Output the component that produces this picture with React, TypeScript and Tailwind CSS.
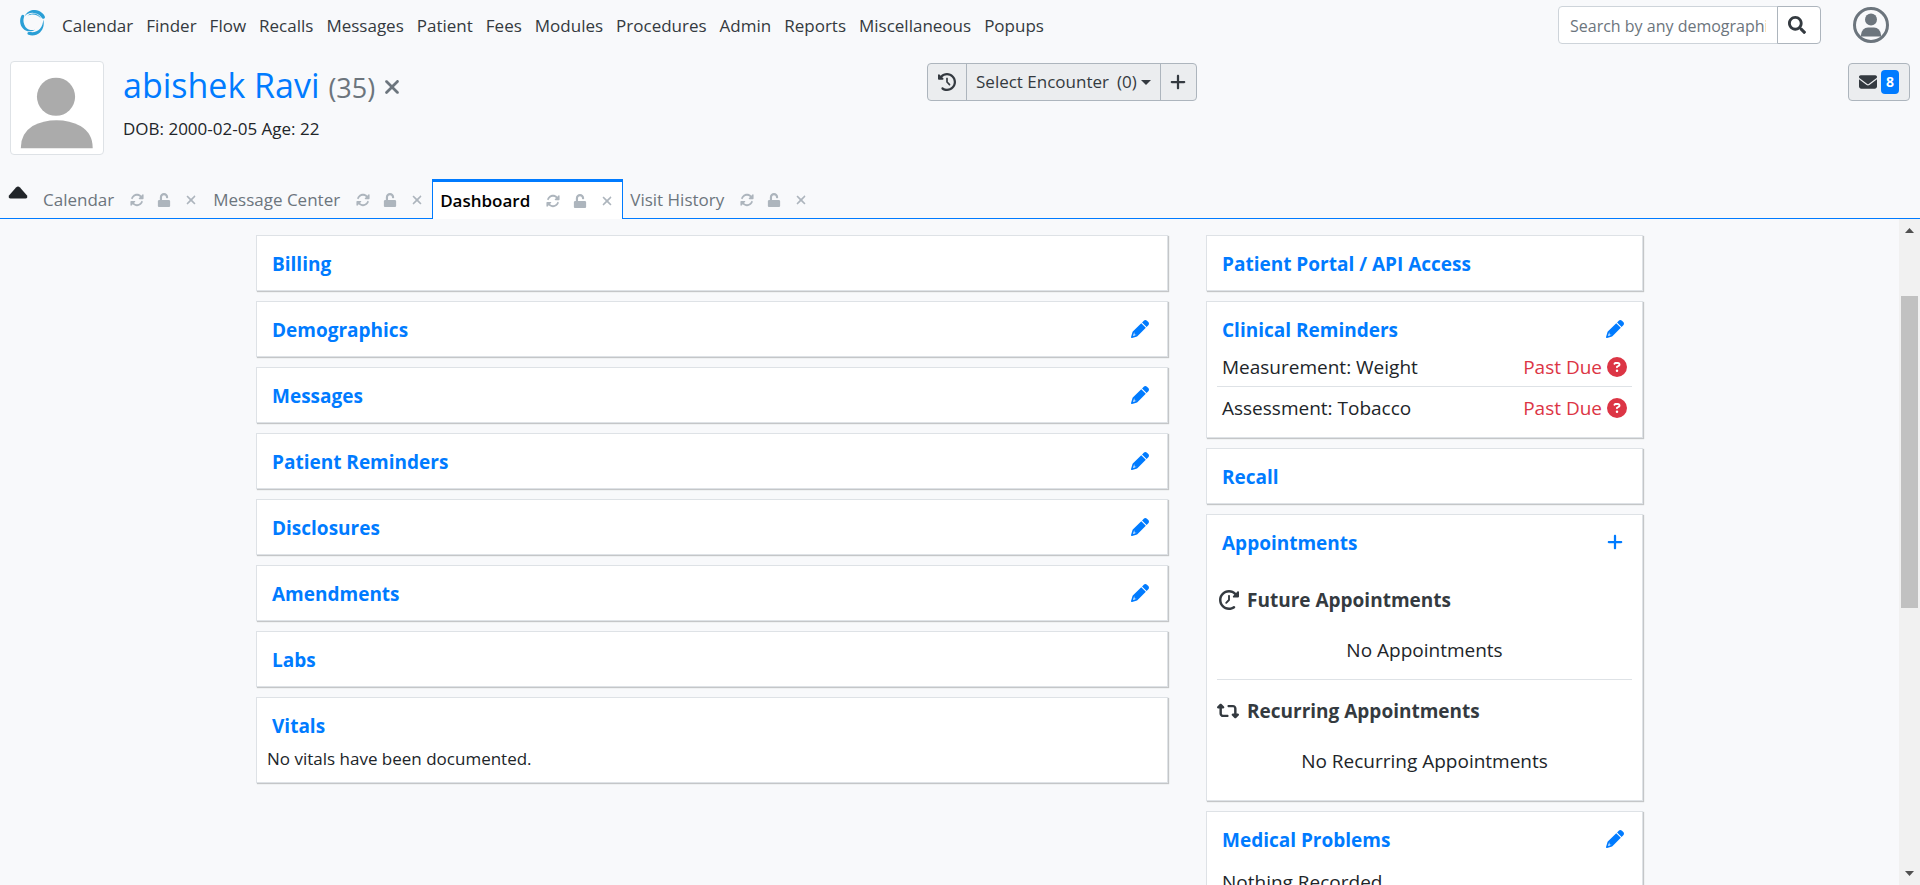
import { ReactNode } from "react";
import { FaSearch, FaUnlock } from "react-icons/fa";
import { FaRotate, FaXmark, FaPlus, FaClockRotateLeft, FaEnvelope, FaCircleQuestion, FaRetweet } from "react-icons/fa6";

const MENU = ["Calendar", "Finder", "Flow", "Recalls", "Messages", "Patient", "Fees", "Modules", "Procedures", "Admin", "Reports", "Miscellaneous", "Popups"];

const TABS = ["Calendar", "Message Center", "Dashboard", "Visit History"];

const LEFT_CARDS = [
  { title: "Billing", edit: false },
  { title: "Demographics", edit: true },
  { title: "Messages", edit: true },
  { title: "Patient Reminders", edit: true },
  { title: "Disclosures", edit: true },
  { title: "Amendments", edit: true },
  { title: "Labs", edit: false },
];

function Logo() {
  return (
    <svg viewBox="0 0 26 28" className="h-7 w-[26px]" fill="#2a9fd6" aria-hidden="true">
      <path d="M5.500 7.500 C8 2.500 12 0.800 16 1 C21 1.500 25 4.500 26 8 C26 10 23.500 10.500 22.500 8.500 C20.500 5.500 17 4 13.500 3.800 C10 3.800 7.500 5 5.500 7.500Z" />
      <path d="M2.500 6.500 C3.500 5 6 6 5 8 C3.800 11 4.500 15 6.500 18 C9 21 12.500 21.500 16 20.800 C11.500 23.500 6.500 22.500 4 19.500 C0.500 16 0.500 10 2.500 6.500Z" />
      <path d="M24.200 10.500 C25.500 15 24.500 20 21 23.500 C18 26.500 13 27.200 9.500 25.800 C7.500 24.500 8.500 22.500 11 23 C15 23.600 18.500 22.500 21 19.800 C23.200 17.300 24.200 14 24.200 10.500Z" />
      <path d="M8 7 C12.500 2.800 19.500 4 22 9.500 C18.500 5 12.500 4.500 8 7Z" />
    </svg>
  );
}

function UserIcon() {
  return (
    <svg viewBox="0 0 36 36" className="size-9" aria-hidden="true">
      <circle cx="18" cy="18" r="16.500" fill="none" stroke="#6c757d" strokeWidth="3" />
      <circle cx="18" cy="12.500" r="6" fill="#6c757d" />
      <path d="M8 29.500 V28 Q9 20.500 15 20.500 H21 Q27 20.500 28 28 V29.500 Z" fill="#6c757d" />
    </svg>
  );
}

function Pencil() {
  return (
    <svg viewBox="0 0 512 512" className="size-[18px]" fill="currentColor" aria-hidden="true">
      <path d="M421.700 220.300L188.500 453.400L154.600 419.500L158.100 416H112C103.200 416 96 408.800 96 400V353.900L92.510 357.400C87.780 362.200 84.310 368 82.420 374.400L59.440 452.600L137.600 429.600C143.100 427.700 149.800 424.200 154.600 419.500L188.500 453.400C178.100 463.800 165.200 471.500 151.100 475.600L30.770 511C22.350 513.500 13.240 511.200 7.030 504.100C.820 498.800-1.502 489.700 .976 481.200L36.370 360.900C40.530 346.800 48.160 333.900 58.570 323.500L291.700 90.340L421.700 220.300ZM492.700 58.750C517.700 83.740 517.700 124.300 492.700 149.300L444.300 197.700L314.300 67.720L362.700 19.320C387.700-5.678 428.300-5.678 453.300 19.320L492.700 58.750Z" />
    </svg>
  );
}

function Card({ title, action, className = "", children }: { title: string; action?: "edit" | "add"; className?: string; children?: ReactNode }) {
  return (
    <section className={`border border-[#dee2e6] bg-white px-[10px] pt-[12px] shadow-[1px_1px_1px_#c4c6c8] ${className}`}>
      <div className="flex h-[32px] items-center justify-between px-[5px]">
        <h2 className="text-[19px] leading-[32px] font-bold">
          <a href="#" className="text-[#007bff]">{title}</a>
        </h2>
        {action && (
          <button type="button" aria-label={`${action} ${title}`} className="mr-[3px] mb-[2px] text-[18px] text-[#007bff]">
            {action === "edit" ? <Pencil /> : <FaPlus />}
          </button>
        )}
      </div>
      {children}
    </section>
  );
}

function Reminder({ label }: { label: string }) {
  return (
    <div className="flex h-[32px] items-center justify-between px-[5px] text-[19px]">
      <span>{label}</span>
      <span className="flex items-center gap-[5px] text-[#dc3545]">
        Past Due <FaCircleQuestion className="size-[20px]" />
      </span>
    </div>
  );
}

export default function App() {
  return (
    <div className="flex h-screen flex-col overflow-hidden bg-[#f8f9fb] font-['Open_Sans','Noto_Sans',sans-serif] text-[17px] leading-[24px] text-[#212529]">
      <header className="flex h-[50px] shrink-0 items-center pr-[31px] pl-[19px]">
        <a href="#" aria-label="Home" className="mb-[4px]"><Logo /></a>
        <nav className="ml-[17px] flex gap-[13px] pt-[2px] text-[17px] text-[#343a40]">
          {MENU.map((m) => <a key={m} href="#">{m}</a>)}
        </nav>
        <form className="ml-auto flex h-[38px]">
          <input type="text" aria-label="Search" placeholder="Search by any demographics" className="w-[220px] rounded-l border border-[#ced4da] bg-white px-[11px] pt-[2px] text-[16px] placeholder:text-[#6c757d]" />
          <button type="button" aria-label="Search" className="-ml-px flex w-[44px] items-center justify-center rounded-r border border-[#adb5bd] bg-white pr-[4px] text-[18px] text-[#343a40]"><FaSearch /></button>
        </form>
        <button type="button" aria-label="Account" className="ml-[32px]"><UserIcon /></button>
      </header>

      <div className="grid h-[129px] shrink-0 grid-cols-[9fr_auto_7fr] items-start px-[10px] pt-[11px]">
        <div className="flex">
          <svg viewBox="0 0 94 94" className="size-[94px] rounded border border-[#dee2e6] bg-white" aria-hidden="true">
            <ellipse cx="46" cy="35.500" rx="19.500" ry="19.500" fill="#ababab" />
            <path d="M10 88 Q10 73 22 65.500 Q33 59.500 46.500 59.500 Q60 59.500 71 65.500 Q83.500 73 83.500 88 Z" fill="#ababab" />
          </svg>
          <div className="ml-[19px]">
            <div className="flex items-center">
              <h1 className="text-[34px] leading-[48px] font-medium text-[#007bff]">
                <a href="#">abishek Ravi</a> <small className="text-[27px] font-normal text-[#6c757d]">(35)</small>
              </h1>
              <button type="button" aria-label="Close patient" className="ml-[6px] text-[22px] text-[#6c757d]"><FaXmark /></button>
            </div>
            <p className="mt-[5px] text-[17px]">DOB: 2000-02-05 Age: 22</p>
          </div>
        </div>
        <div className="mt-[2px] flex h-[38px] rounded border border-[#adb5bd] bg-[#ebedef] text-[#343a40]">
          <button type="button" aria-label="Encounter history" className="flex w-[38px] items-center justify-center text-[18px]"><FaClockRotateLeft /></button>
          <button type="button" className="flex items-center border-x border-[#adb5bd] px-[9px] text-[17px]">
            Select Encounter
            <span className="ml-[8px]">(0)</span>
            <span className="ml-[4px] border-x-[5px] border-t-[5px] border-x-transparent border-t-[#343a40]" />
          </button>
          <button type="button" aria-label="Add encounter" className="flex w-[35px] items-center justify-center text-[18px]"><FaPlus /></button>
        </div>
        <button type="button" aria-label="Messages" className="mt-[2px] flex h-[38px] items-center gap-[4px] justify-self-end rounded border border-[#adb5bd] bg-[#ebedef] px-[10px] text-[#343a40]">
          <FaEnvelope className="size-[18px]" />
          <span className="flex h-[24px] w-[18px] items-center justify-center rounded bg-[#007bff] text-[14px] font-bold text-white">8</span>
        </button>
      </div>

      <div className="flex h-[40px] shrink-0 items-stretch">
        <button type="button" aria-label="Collapse header" className="flex w-[36px] items-start border-b border-[#007bff] pt-[7px] pl-[8px]">
          <svg viewBox="0 0 20 13" className="h-[13px] w-[20px]" aria-hidden="true"><path d="M10 0.500 Q11 0.500 12 1.500 L19 9.500 Q20 12.500 17.500 12.500 H2.500 Q0 12.500 1 9.500 L8 1.500 Q9 0.500 10 0.500Z" fill="#212529" /></svg>
        </button>
        {TABS.map((t) => {
          const active = t === "Dashboard";
          return (
            <div key={t} className={`flex items-center pr-[8px] pl-[7px] ${active ? "border-x border-t-[3px] border-[#007bff] bg-white text-black" : "border-b border-[#007bff] pt-[3px] text-[#6c757d]"}`}>
              <button type="button" className={active ? "text-[17px] font-semibold" : "text-[17px]"}>{t}</button>
              <div className="ml-[16px] flex items-center gap-[13px] text-[14px] text-[#adb5bd]">
                <button type="button" aria-label={`Refresh ${t}`}><FaRotate /></button>
                <button type="button" aria-label={`Lock ${t}`}><FaUnlock /></button>
                <button type="button" aria-label={`Close ${t}`}><FaXmark /></button>
              </div>
            </div>
          );
        })}
        <div className="grow border-b border-[#007bff]" />
      </div>

      <div className="flex min-h-0 grow">
        <main className="grow overflow-hidden">
          <div className="mx-auto flex max-w-[1425px] items-start pt-[16px]">
            <div className="flex w-2/3 flex-col gap-[10px] px-[19px]">
              {LEFT_CARDS.map((c) => <Card key={c.title} title={c.title} action={c.edit ? "edit" : undefined} className="pb-[10px]" />)}
              <Card title="Vitals" className="pb-[11px]">
                <p className="pt-[5px] text-[17px]">No vitals have been documented.</p>
              </Card>
            </div>
            <div className="flex w-1/3 flex-col gap-[10px] px-[19px]">
              <Card title="Patient Portal / API Access" className="pb-[10px]" />
              <Card title="Clinical Reminders" action="edit" className="pb-[13px]">
                <div className="mt-[5px] border-b border-[#dee2e6] pb-[3px]"><Reminder label="Measurement: Weight" /></div>
                <div className="pt-[5px]"><Reminder label="Assessment: Tobacco" /></div>
              </Card>
              <Card title="Recall" className="pb-[10px]" />
              <Card title="Appointments" action="add" className="pb-[23px]">
                <h3 className="mt-[25px] flex items-center gap-[8px] text-[19px] leading-[32px] font-bold text-[#343a40]">
                  <FaClockRotateLeft className="ml-[2px] size-[20px] -scale-x-100" />Future Appointments
                </h3>
                <p className="mt-[18px] border-b border-[#dee2e6] pb-[13px] text-center text-[19px] leading-[32px]">No Appointments</p>
                <h3 className="mt-[15px] flex items-center gap-[8px] text-[19px] leading-[32px] font-bold text-[#343a40]">
                  <FaRetweet className="size-[22px]" />Recurring Appointments
                </h3>
                <p className="mt-[18px] text-center text-[19px] leading-[32px]">No Recurring Appointments</p>
              </Card>
              <Card title="Medical Problems" action="edit" className="pb-[10px]">
                <p className="mt-[10px] px-[5px] text-[19px] leading-[32px]">Nothing Recorded</p>
              </Card>
            </div>
          </div>
        </main>
        <div className="flex w-[21px] shrink-0 flex-col items-center bg-[#f1f1f1]" aria-hidden="true">
          <svg viewBox="0 0 9 5" className="mt-[9px] h-[5px] w-[9px]"><path d="M4.500 0 L9 5 H0Z" fill="#505050" /></svg>
          <div className="mt-[63px] h-[312px] w-[17px] bg-[#c1c1c1]" />
          <svg viewBox="0 0 9 5" className="mt-auto mb-[9px] h-[5px] w-[9px]"><path d="M0 0 H9 L4.500 5Z" fill="#505050" /></svg>
        </div>
      </div>
    </div>
  );
}
